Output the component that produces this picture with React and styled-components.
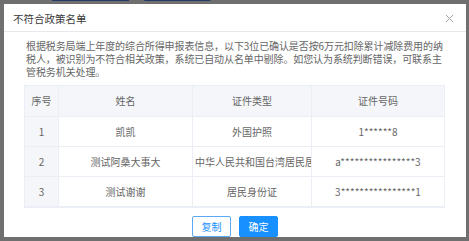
import styled, { createGlobalStyle } from "styled-components";

const GlobalStyle = createGlobalStyle`
    html, body {
        margin: 0;
        padding: 0;
        background: #6f6f6f;
        font-family: "Noto Sans CJK SC", "Liberation Sans", sans-serif;
    }
`;

const rows = [
    { no: 1, name: "凯凯", type: "外国护照", id: "1******8" },
    { no: 2, name: "测试阿桑大事大", type: "中华人民共和国台湾居民居住证", id: "a****************3" },
    { no: 3, name: "测试谢谢", type: "居民身份证", id: "3****************1" },
];

export default function App() {
    return (
        <Page>
            <GlobalStyle />
            <Crumb>
                <CrumbText>税务申报表报送</CrumbText>
                <CrumbSep>›</CrumbSep>
                <CrumbText>综合所得申报</CrumbText>
            </Crumb>
            <Modal>
                <Header>
                    <Title>不符合政策名单</Title>
                    <Close viewBox="0 0 10 10">
                        <path d="M1 1 L9 9 M9 1 L1 9" stroke="#9a9a9a" strokeWidth="1" fill="none" />
                    </Close>
                </Header>
                <Body>
                    <Notice>
                        根据税务局端上年度的综合所得申报表信息，以下3位已确认是否按6万元扣除累计减除费用的纳<br />
                        税人，被识别为不符合相关政策，系统已自动从名单中剔除。如您认为系统判断错误，可联系主<br />
                        管税务机关处理。
                    </Notice>
                    <Table>
                        <Row head>
                            <Cell head>序号</Cell>
                            <Cell head>姓名</Cell>
                            <Cell head>证件类型</Cell>
                            <Cell head last>证件号码</Cell>
                        </Row>
                        {rows.map(r => (
                            <Row key={r.no}>
                                <Cell>{r.no}</Cell>
                                <Cell>{r.name}</Cell>
                                <Cell>{r.type}</Cell>
                                <Cell last>{r.id}</Cell>
                            </Row>
                        ))}
                    </Table>
                </Body>
                <Footer>
                    <Button>复制</Button>
                    <Button primary>确定</Button>
                </Footer>
            </Modal>
        </Page>
    );
}

const Page = styled.div`
    width: 469px;
    height: 241px;
    box-sizing: border-box;
    padding: 0 3px 4px 4px;
    display: flex;
    flex-direction: column;
`

const Crumb = styled.div`
    height: 4px;
    overflow: hidden;
    display: flex;
    align-items: flex-end;
    gap: 6px;
    padding-left: 48px;
    font-size: 11px;
    line-height: 11px;
    color: #233a66;
`

const CrumbText = styled.span`
    transform: translateY(-4px);
    text-decoration: underline;
`

const CrumbSep = styled.span`
    transform: translateY(-4px);
    color: #444;
`

const Modal = styled.div`
    flex: 1;
    background: #ffffff;
    display: flex;
    flex-direction: column;
`

const Header = styled.div`
    height: 28px;
    box-sizing: border-box;
    border-bottom: 1px solid #e6e8ee;
    display: flex;
    align-items: center;
    justify-content: space-between;
    padding: 0 12px 0 9px;
`

const Title = styled.span`
    font-size: 10.5px;
    color: #3a3a3a;
    padding-top: 1px;
`

const Close = styled.svg`
    width: 9px;
    height: 9px;
    margin-top: 1px;
`

const Body = styled.div`
    padding: 7px 20px 0 20px;
`

const Notice = styled.p`
    margin: 0 -10px 7px 0;
    padding-left: 2px;
    font-size: 10px;
    line-height: 13px;
    letter-spacing: -0.1px;
    white-space: nowrap;
    color: #666666;
`

const Table = styled.div`
    width: 421px;
    border: 1px solid #ebeef5;
    border-bottom-width: 2px;
    box-sizing: border-box;
`

const Row = styled.div`
    display: grid;
    grid-template-columns: 34px 134px 119px 1fr;
    height: ${p => (p.head ? "30px" : "29px")};
    line-height: ${p => (p.head ? "30px" : "29px")};
    background: ${p => (p.head ? "#f4f6f9" : "#ffffff")};
    border-bottom: 1px solid #ebeef5;

    &:last-child {
        border-bottom: none;
    }
`

const Cell = styled.div`
    text-align: center;
    overflow: hidden;
    white-space: nowrap;
    padding: 0 2px;
    font-size: 10px;
    color: #666666;
    border-right: ${p => (p.last ? "none" : "1px solid #ebeef5")};

    &:first-child {
        background: #f4f6f9;
    }
`

const Footer = styled.div`
    display: flex;
    justify-content: center;
    gap: 8px;
    padding-top: 8px;
`

const Button = styled.button`
    width: 39px;
    height: 21px;
    padding: 0;
    border-radius: 2px;
    font-family: "Noto Sans CJK SC", "Liberation Sans", sans-serif;
    font-size: 10px;
    border: 1px solid ${p => (p.primary ? "#1890ff" : "#5aa9f5")};
    background: ${p => (p.primary ? "#1890ff" : "#ffffff")};
    color: ${p => (p.primary ? "#ffffff" : "#1890ff")};
`
